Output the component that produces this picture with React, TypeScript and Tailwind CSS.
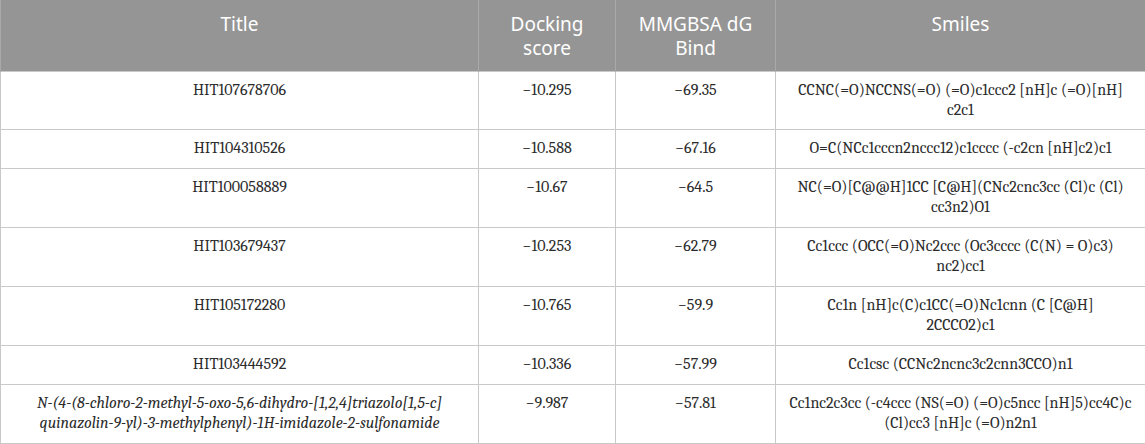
const rows = [
  { title: "HIT107678706", dock: "−10.295", mm: "−69.35", smiles: ["CCNC(=O)NCCNS(=O) (=O)c1ccc2 [nH]c (=O)[nH]", "c2c1"], h: "h-[58px]" },
  { title: "HIT104310526", dock: "−10.588", mm: "−67.16", smiles: ["O=C(NCc1cccn2nccc12)c1cccc (-c2cn [nH]c2)c1"], h: "h-[39px]" },
  { title: "HIT100058889", dock: "−10.67", mm: "−64.5", smiles: ["NC(=O)[C@@H]1CC [C@H](CNc2cnc3cc (Cl)c (Cl)", "cc3n2)O1"], h: "h-[59px]" },
  { title: "HIT103679437", dock: "−10.253", mm: "−62.79", smiles: ["Cc1ccc (OCC(=O)Nc2ccc (Oc3cccc (C(N) = O)c3)", "nc2)cc1"], h: "h-[59px]" },
  { title: "HIT105172280", dock: "−10.765", mm: "−59.9", smiles: ["Cc1n [nH]c(C)c1CC(=O)Nc1cnn (C [C@H]", "2CCCO2)c1"], h: "h-[59px]" },
  { title: "HIT103444592", dock: "−10.336", mm: "−57.99", smiles: ["Cc1csc (CCNc2ncnc3c2cnn3CCO)n1"], h: "h-[39px]" },
];

const cell = "border border-[#c9c9c9] align-top text-center pt-[8px] px-2 font-serif";
const head = "font-normal align-top pt-[12px] border-x border-[#a9a9a9] font-sans";

export default function App() {
  return (
    <div className="w-[1145px] h-[444px] bg-white overflow-hidden">
      <table className="table-fixed border-collapse w-[1145px] text-[16px] leading-[20px] text-[#2b2b2b]">
        <colgroup>
          <col className="w-[478px]" />
          <col className="w-[137px]" />
          <col className="w-[160px]" />
          <col className="w-[370px]" />
        </colgroup>
        <thead>
          <tr className="h-[71px] bg-[#959595] text-white text-[19px] leading-[24px]">
            <th className={head}>Title</th>
            <th className={head}>
              Docking
              <br />
              score
            </th>
            <th className={head}>
              MMGBSA dG
              <br />
              Bind
            </th>
            <th className={head}>Smiles</th>
          </tr>
        </thead>
        <tbody>
          {rows.map((r) => (
            <tr key={r.title} className={r.h}>
              <td className={cell}>{r.title}</td>
              <td className={cell}>{r.dock}</td>
              <td className={cell}>{r.mm}</td>
              <td className={cell}>
                {r.smiles.map((s) => (
                  <div key={s} className="whitespace-nowrap">{s}</div>
                ))}
              </td>
            </tr>
          ))}
          <tr className="h-[59px]">
            <td className={cell + " italic"}>
              <div className="whitespace-nowrap">N-(4-(8-chloro-2-methyl-5-oxo-5,6-dihydro-[1,2,4]triazolo[1,5-c]</div>
              <div className="whitespace-nowrap">quinazolin-9-yl)-3-methylphenyl)-1H-imidazole-2-sulfonamide</div>
            </td>
            <td className={cell}>−9.987</td>
            <td className={cell}>−57.81</td>
            <td className={cell}>
              <div className="whitespace-nowrap">Cc1nc2c3cc (-c4ccc (NS(=O) (=O)c5ncc [nH]5)cc4C)c</div>
              <div className="whitespace-nowrap">(Cl)cc3 [nH]c (=O)n2n1</div>
            </td>
          </tr>
        </tbody>
      </table>
    </div>
  );
}
